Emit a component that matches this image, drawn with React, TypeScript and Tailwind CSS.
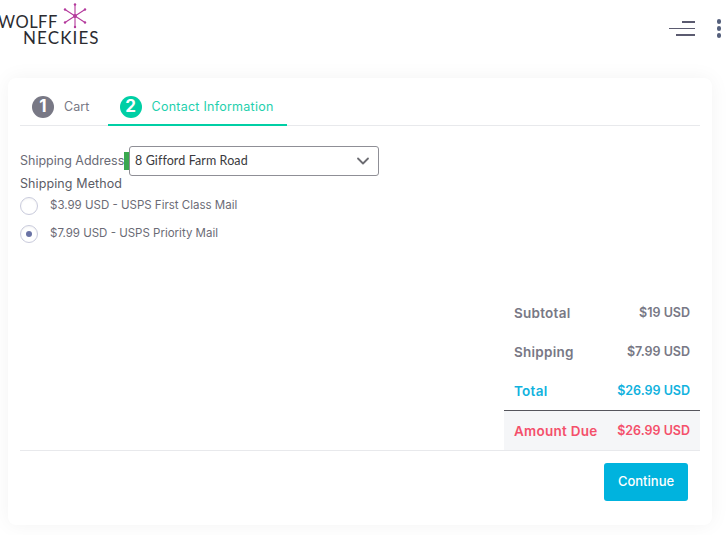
import { ChevronDown } from "lucide-react";

const font = "font-['Inter','Noto_Sans',sans-serif]";

function Logo() {
  return (
    <div className="relative w-[100px] h-[46px] font-['Lato',sans-serif] text-[#2b2b30]">
      <div className="absolute left-[-2px] top-[15px] text-[16.5px] leading-[14px] tracking-[0.5px]">WOLFF</div>
      <div className="absolute left-[23px] top-[31px] text-[17px] leading-[14px] tracking-[1.1px]">NECKIES</div>
      <svg className="absolute left-[62px] top-[2px]" width="28" height="28" viewBox="0 0 28 28" stroke="#b43a9c" fill="#b43a9c">
        <path d="M13 2V25M3 7.5L23 20.5M3 20.5L23 7.5" strokeWidth="1.1" />
        <circle cx="13" cy="14" r="2" stroke="none" />
        <circle cx="13" cy="2.5" r="1.2" stroke="none" />
        <circle cx="13" cy="25" r="1.2" stroke="none" />
        <circle cx="3" cy="7.5" r="1.2" stroke="none" />
        <circle cx="23" cy="7.5" r="1.2" stroke="none" />
        <circle cx="3" cy="20.5" r="1.2" stroke="none" />
        <circle cx="23" cy="20.5" r="1.2" stroke="none" />
      </svg>
    </div>
  );
}

function Radio({ label, checked }: { label: string; checked?: boolean }) {
  return (
    <div className="flex items-center h-[28px]">
      <span className="w-[18px] h-[18px] rounded-full border border-[#c9cbdc] bg-white flex items-center justify-center shadow-[inset_0_1px_2px_rgba(0,0,0,0.05)]">
        {checked && <span className="w-[6px] h-[6px] rounded-full bg-[#6a73a5]" />}
      </span>
      <span className="ml-[12px] text-[11.5px] text-[#6b6b76]">{label}</span>
    </div>
  );
}

function Row({ label, value, className }: { label: string; value: string; className: string }) {
  return (
    <div className={`flex justify-between items-center h-[39px] px-[10px] font-semibold ${className}`}>
      <span className="text-[13.5px] leading-[16px] tracking-[0.25px]">{label}</span>
      <span className="text-[12.5px] leading-[16px]">{value}</span>
    </div>
  );
}

export default function App() {
  return (
    <div className={`${font} w-[726px] h-[535px] overflow-hidden bg-white flex flex-col`}>
      <div className="h-[60px] flex items-start justify-between pl-0 pr-[5px] shrink-0">
        <Logo />
        <div className="flex items-start pt-[19px]">
          <div className="flex flex-col items-end gap-[5px] pt-[2px]">
            <span className="w-[13px] h-[1.5px] bg-[#5b5b70]" />
            <span className="w-[26px] h-[1.5px] bg-[#5b5b70]" />
            <span className="w-[19px] h-[1.5px] bg-[#5b5b70]" />
          </div>
          <div className="ml-[22px] flex flex-col gap-[2.5px]">
            <span className="w-[4.5px] h-[4.5px] rounded-full bg-[#55607c]" />
            <span className="w-[4.5px] h-[4.5px] rounded-full bg-[#55607c]" />
            <span className="w-[4.5px] h-[4.5px] rounded-full bg-[#55607c]" />
          </div>
        </div>
      </div>

      <div className="mx-[8px] mt-[18px] w-[704px] h-[447px] bg-white rounded-[8px] shadow-[0_0_20px_rgba(0,0,0,0.05)] px-[12px] flex flex-col">
        <div className="flex h-[48px] border-b border-[#e8e9ec] shrink-0">
          <div className="flex items-center pl-[12px] pr-[12px] mr-[6px] h-[48px] pt-[12px] pb-[2px]">
            <span className="w-[22px] h-[22px] rounded-full bg-[#787885] text-white text-[17px] font-bold flex items-center justify-center">1</span>
            <span className="ml-[10px] text-[12.5px] tracking-[0.1px] text-[#787885]">Cart</span>
          </div>
          <div className="flex items-center pl-[12px] pr-[13px] h-[48px] pt-[12px] border-b-2 border-[#00cfa5]">
            <span className="w-[22px] h-[22px] rounded-full bg-[#00cfa5] text-white text-[17px] font-bold flex items-center justify-center">2</span>
            <span className="ml-[10px] text-[12.5px] tracking-[0.25px] text-[#1fd0ad]">Contact Information</span>
          </div>
        </div>

        <div className="flex items-center mt-[20px] h-[30px]">
          <span className="text-[12.5px] text-[#6b6b76] w-[104px] whitespace-nowrap">Shipping Address</span>
          <span className="w-[5px] h-[18px] bg-[#3aa84f]" />
          <div className="w-[250px] h-[30px] border border-[#8f8f96] rounded-[3px] bg-white flex items-center justify-between pl-[5px] pr-[5px]">
            <span className="font-['Lato',sans-serif] text-[12.5px] tracking-[0.1px] text-[#3a3a40]">8 Gifford Farm Road</span>
            <ChevronDown size={20} strokeWidth={2.2} className="text-[#6c6c72]" />
          </div>
        </div>
        <div className="text-[12.5px] tracking-[0.1px] text-[#5c5c66] h-[16px] leading-[15px]">Shipping Method</div>
        <Radio label="$3.99 USD - USPS First Class Mail" />
        <Radio label="$7.99 USD - USPS Priority Mail" checked />

        <div className="self-end w-[196px] mt-[45px]">
          <Row label="Subtotal" value="$19 USD" className="text-[#787885]" />
          <Row label="Shipping" value="$7.99 USD" className="text-[#787885]" />
          <Row label="Total" value="$26.99 USD" className="text-[#11b2de] border-b border-[#55555c] h-[40px]" />
          <Row label="Amount Due" value="$26.99 USD" className="text-[#f4506b] bg-[#f5f6f8]" />
        </div>
        <div className="border-t border-[#e8e9ec] flex justify-end pt-[12px] pr-[12px]">
          <button className="w-[84px] h-[38px] rounded-[3px] bg-[#00b3de] text-white text-[13px] font-medium">Continue</button>
        </div>
      </div>
    </div>
  );
}
